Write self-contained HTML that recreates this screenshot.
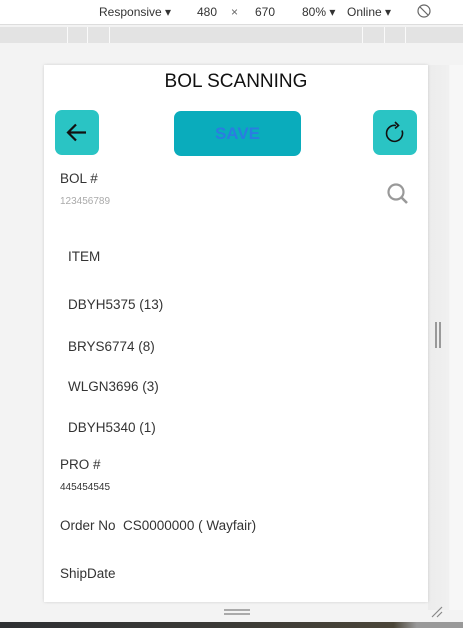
<!DOCTYPE html>
<html><head><meta charset="utf-8"><style>
*{margin:0;padding:0;box-sizing:border-box}
body{width:463px;height:628px;overflow:hidden;background:#f3f3f3;font-family:"Liberation Sans",sans-serif;position:relative}
.top{position:absolute;left:0;top:0;width:463px;height:25px;background:#fff;border-bottom:1px solid #ddd;font-size:12px;color:#333}
.top span{position:absolute;top:5px}
.ruler{position:absolute;left:0;top:27px;width:463px;height:16px;background:#e3e3e3}
.ruler i{position:absolute;top:0;width:1px;height:16px;background:#fafafa}
.card{position:absolute;left:44px;top:65px;width:384px;height:537px;background:#fff;box-shadow:0 0 3px rgba(0,0,0,.15)}
.t{position:absolute;color:#333;font-size:13.5px}
.btn{position:absolute;border-radius:7px}
</style></head><body>
<div class="top">
<span style="left:99px">Responsive ▾</span>
<span style="left:187px;width:40px;height:18px;top:3px;background:#fff;padding-top:2px;text-align:center">480</span>
<span style="left:231px;color:#666">×</span>
<span style="left:255px">670</span>
<span style="left:302px">80% ▾</span>
<span style="left:347px">Online ▾</span>
<span style="left:416px;top:3px"><svg width="16" height="16" viewBox="0 0 16 16"><circle cx="8" cy="8" r="6" fill="none" stroke="#666" stroke-width="1.2"/><line x1="4" y1="4" x2="12" y2="12" stroke="#666" stroke-width="1.2"/></svg></span>
</div>
<div class="ruler"><i style="left:67px"></i><i style="left:87px"></i><i style="left:109px"></i><i style="left:362px"></i><i style="left:384px"></i><i style="left:405px"></i></div>
<div style="position:absolute;left:428px;top:65px;width:35px;height:545px;background:linear-gradient(90deg,#ececec,#f0f0f0 60%,#f7f7f7 62%)"></div>
<div class="card">
<div class="t" style="left:0;width:384px;text-align:center;top:6px;font-size:19px;color:#111">BOL SCANNING</div>
<div class="btn" style="left:11px;top:45px;width:44px;height:45px;background:#2ac4c4"><svg width="44" height="45" viewBox="0 0 44 45"><path d="M31 22.5H13M21 14.5l-8 8 8 8" fill="none" stroke="#111" stroke-width="2.2"/></svg></div>
<div class="btn" style="left:130px;top:46px;width:127px;height:45px;background:#0aacbc;color:#2a7de0;font-weight:bold;font-size:17px;text-align:center;line-height:45px">SAVE</div>
<div class="btn" style="left:329px;top:45px;width:44px;height:45px;background:#2ac4c4"><svg width="44" height="45" viewBox="0 0 44 45"><path d="M23 15.5a8 8 0 1 0 6 5" fill="none" stroke="#111" stroke-width="1.6"/><path d="M22 12l3.5 3.5-3.5 3" fill="none" stroke="#111" stroke-width="1.6"/></svg></div>
<div class="t" style="left:16px;top:106px">BOL #</div>
<div class="t" style="left:16px;top:131px;font-size:10px;color:#aaa">123456789</div>
<svg style="position:absolute;left:341px;top:116px" width="26" height="26" viewBox="0 0 26 26"><circle cx="11" cy="11" r="7.5" fill="none" stroke="#999" stroke-width="2.2"/><line x1="16.5" y1="16.5" x2="22" y2="22" stroke="#999" stroke-width="2.6"/></svg>
<div class="t" style="left:24px;top:184px">ITEM</div>
<div class="t" style="left:24px;top:232px">DBYH5375 (13)</div>
<div class="t" style="left:24px;top:274px">BRYS6774 (8)</div>
<div class="t" style="left:24px;top:314px">WLGN3696 (3)</div>
<div class="t" style="left:24px;top:355px">DBYH5340 (1)</div>
<div class="t" style="left:16px;top:392px">PRO #</div>
<div class="t" style="left:16px;top:417px;font-size:10px">445454545</div>
<div class="t" style="left:16px;top:453px">Order No&nbsp; CS0000000 ( Wayfair)</div>
<div class="t" style="left:16px;top:501px">ShipDate</div>
</div>
<div style="position:absolute;left:435px;top:322px;width:2px;height:26px;background:#999"></div>
<div style="position:absolute;left:439px;top:322px;width:2px;height:26px;background:#999"></div>
<div style="position:absolute;left:224px;top:609px;width:26px;height:2px;background:#aaa"></div>
<div style="position:absolute;left:224px;top:613px;width:26px;height:2px;background:#aaa"></div>
<svg style="position:absolute;left:430px;top:605px" width="14" height="14"><path d="M2 12L12 2M7 12L12 7" stroke="#888" stroke-width="1.2"/></svg>
<div style="position:absolute;left:0;top:622px;width:463px;height:6px;background:linear-gradient(90deg,#2e3033,#3b3a36 50%,#4a4538 85%,#999 90%)"></div>
</body></html>
